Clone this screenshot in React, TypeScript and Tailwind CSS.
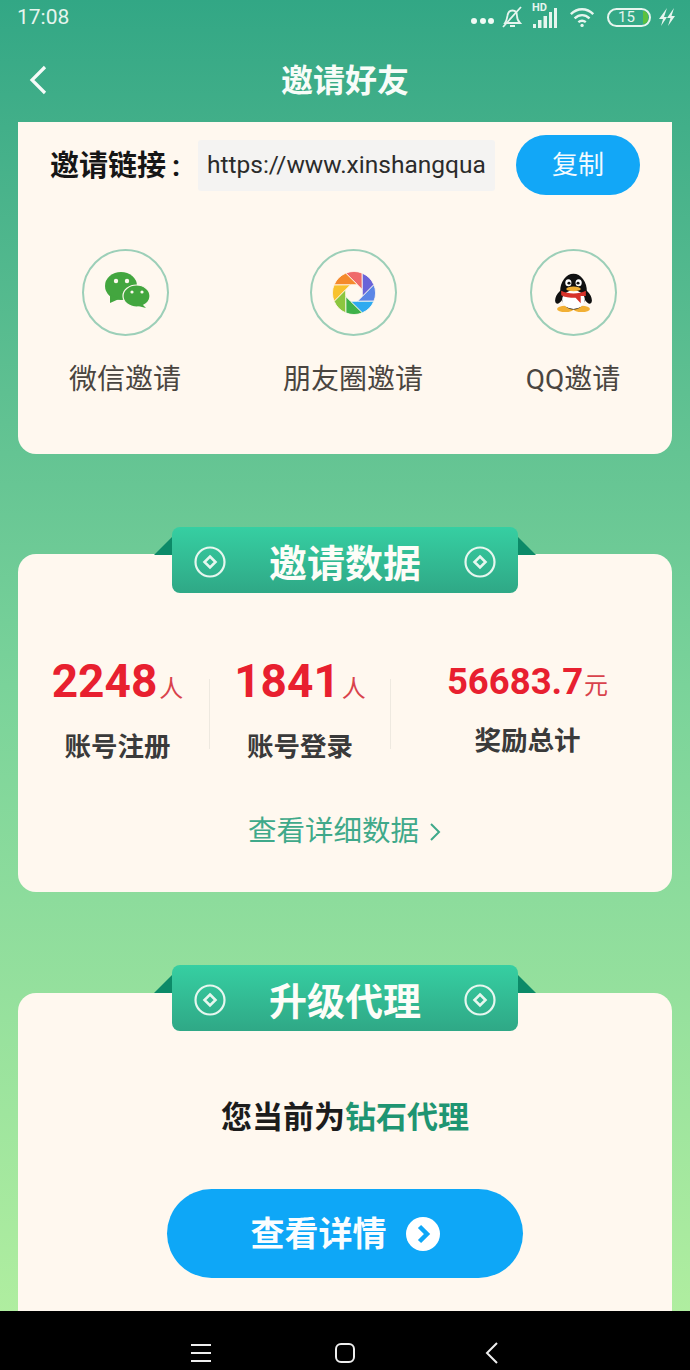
const cjk = "font-['Roboto','Noto_Sans_CJK_SC',sans-serif]";

const Coin = () => (
  <svg className="mt-[4px]" width="32" height="32" viewBox="0 0 32 32" fill="none" stroke="#e6f7ef" strokeWidth="2.2">
    <circle cx="16" cy="16" r="14.5" />
    <path d="M16 10.5 21.5 16 16 21.5 10.5 16Z" strokeWidth="2.6" />
  </svg>
);

const Ribbon = ({ title, className }: { title: string; className: string }) => (
  <div className={`absolute left-[136px] w-[382px] h-[66px] ${className}`}>
    <svg className="absolute left-0 top-[10px]" width="18" height="18" viewBox="0 0 18 18">
      <path d="M0 18 18 0V18Z" fill="#0c8a68" />
    </svg>
    <svg className="absolute right-0 top-[10px]" width="18" height="18" viewBox="0 0 18 18">
      <path d="M18 18 0 0V18Z" fill="#0c8a68" />
    </svg>
    <div className="absolute left-[18px] right-[18px] top-0 h-[66px] rounded-[8px] bg-gradient-to-b from-[#36cfa2] to-[#2fa886] flex items-center justify-between px-[22px]">
      <Coin />
      <span className="pt-[7px] text-[38px] leading-none font-bold text-[#fdfdf8]">{title}</span>
      <Coin />
    </div>
  </div>
);

const WeChat = () => (
  <svg className="ml-[4px] mb-[5px]" width="45" height="36" viewBox="0 0 45 36">
    <ellipse cx="16" cy="14" rx="16" ry="14" fill="#43a63f" />
    <path d="M5 22 5 31 14 27Z" fill="#43a63f" />
    <ellipse cx="31.5" cy="24" rx="13.5" ry="11" fill="#43a63f" stroke="#fff8ef" strokeWidth="1.2" />
    <path d="M37 32 41 36 33 34Z" fill="#43a63f" />
    <circle cx="11" cy="9" r="2.2" fill="#fff8ef" />
    <circle cx="22" cy="9" r="2.2" fill="#fff8ef" />
    <circle cx="27" cy="20" r="1.6" fill="#fff8ef" />
    <circle cx="37" cy="20" r="1.6" fill="#fff8ef" />
  </svg>
);

const Shutter = () => {
  const colors = ["#ef6b6b", "#6a63d8", "#5b86e6", "#2eaaf0", "#3fb24a", "#8cc63f", "#f8c22e", "#f58a2c"];
  return (
    <svg className="ml-[2px]" width="44" height="44" viewBox="-22 -22 44 44">
      {colors.map((c, i) => (
        <path
          key={c}
          d="M-8.23 -19.86A21.5 21.5 0 0 1 8.23 -19.86L8.31 -3.44 3.44 -8.31Z"
          fill={c}
          stroke="#fff8ef"
          strokeWidth="0.8"
          transform={`rotate(${i * 45})`}
        />
      ))}
    </svg>
  );
};

const Penguin = () => (
  <svg width="37" height="41" viewBox="0 0 36 46" preserveAspectRatio="none">
    <ellipse cx="10" cy="41.5" rx="8" ry="3.5" fill="#f2b035" />
    <ellipse cx="26" cy="41.5" rx="8" ry="3.5" fill="#f2b035" />
    <ellipse cx="4.5" cy="28" rx="3.5" ry="8" fill="#111" transform="rotate(22 4.5 28)" />
    <ellipse cx="31.5" cy="28" rx="3.5" ry="8" fill="#111" transform="rotate(-22 31.5 28)" />
    <ellipse cx="18" cy="22" rx="13" ry="20" fill="#111" />
    <ellipse cx="18" cy="31" rx="11" ry="10.5" fill="#fff" />
    <path d="M6 21C13 25 23 25 30 21L30 27 25 27 25 35 20 29C14 29 9 28 6 26Z" fill="#d6322a" />
    <ellipse cx="13" cy="12" rx="3" ry="4" fill="#fff" />
    <ellipse cx="23" cy="12" rx="3" ry="4" fill="#fff" />
    <circle cx="13.6" cy="12.5" r="1.5" fill="#111" />
    <circle cx="22.4" cy="12.5" r="1.5" fill="#111" />
    <ellipse cx="18" cy="19" rx="7" ry="2.6" fill="#f2b035" />
  </svg>
);

const Share = ({ icon, label, className }: { icon: React.ReactNode; label: string; className: string }) => (
  <div className={`flex flex-col items-center ${className}`}>
    <div className="w-[87px] h-[87px] rounded-full border-2 border-[#9ccfb8] flex items-center justify-center">
      {icon}
    </div>
    <span className="mt-[26px] text-[28px] leading-[36px] text-[#4a4540] whitespace-nowrap">{label}</span>
  </div>
);

const Stat = ({ value, unit, label, className }: { value: string; unit: string; label: string; className: string }) => (
  <div className={`flex flex-col items-center ${className}`}>
    <div className="flex items-baseline text-[#e8202f] h-[52px]">
      <span className="text-[46px] leading-[52px] font-bold">{value}</span>
      <span className="ml-[2px] text-[24px] text-[#d9434c]">{unit}</span>
    </div>
    <span className="mt-[22px] text-[26.5px] leading-[36px] font-bold text-[#3a3a3a]">{label}</span>
  </div>
);

export default function App() {
  return (
    <div className={`relative w-[690px] h-[1370px] overflow-hidden flex flex-col bg-gradient-to-b from-[#32a785] via-[#7ad39a] to-[#b4f0a0] ${cjk}`}>
      {/* status bar */}
      <div className="h-[34px] shrink-0 flex items-center pl-[17px] pr-[14px] text-[#e6f5ee]">
        <span className="text-[21px] leading-none">17:08</span>
        <div className="ml-auto flex items-center">
          <div className="flex gap-[2.5px] mt-[8px]">
            <i className="w-[6px] h-[6px] rounded-full bg-[#f0faf5]" />
            <i className="w-[6px] h-[6px] rounded-full bg-[#f0faf5]" />
            <i className="w-[6px] h-[6px] rounded-full bg-[#f0faf5]" />
          </div>
          <svg className="ml-[6px]" width="24" height="24" viewBox="0 0 24 24" fill="none" stroke="#e6f5ee" strokeWidth="1.8">
            <path d="M5 18C7 15 7 13 7.5 10.5 8 7.5 10 5.5 12.5 5.5 15.5 5.5 17 8 17 11 17 14 18 16 20 18Z" />
            <path d="M10 21h5M3 22 21 2" />
          </svg>
          <div className="ml-[8px] relative w-[26px] h-[24px]">
            <span className="absolute left-0 top-[-3px] text-[11px] leading-[12px] font-bold">HD</span>
            <svg className="absolute left-0 top-0" width="26" height="24" viewBox="0 0 26 24" fill="#e6f5ee">
              <rect x="1" y="19" width="3" height="4" />
              <rect x="6" y="15" width="3.5" height="8" />
              <rect x="11.5" y="11" width="3.5" height="12" />
              <rect x="17" y="7" width="3" height="16" />
              <rect x="22" y="3" width="3" height="20" />
            </svg>
          </div>
          <svg className="ml-[11px]" width="28" height="24" viewBox="0 0 30 24" fill="none" stroke="#e6f5ee" strokeWidth="2.6">
            <path d="M2 9C9 2 19 2 26 9M6 13.5C11 9 17 9 22 13.5M10 17.5C12.5 15.5 15.5 15.5 18 17.5" />
            <circle cx="14" cy="21" r="1.8" fill="#e6f5ee" stroke="none" />
          </svg>
          <div className="ml-[10px] w-[44px] h-[19px] rounded-full border-2 border-[#e6f5ee] flex items-center justify-center relative">
            <span className="text-[15px] leading-none mr-[5px]">15</span>
            <i className="absolute right-[1px] top-[1px] w-[5px] h-[13px] rounded-r-full bg-[#5cc13f]" />
          </div>
          <svg className="ml-[7px]" width="18" height="20" viewBox="0 0 18 20" fill="#e6f5ee">
            <path d="M9 1 1 12H5L3 19 9 10H6ZM16 1 9 11H12.5L10 19 17 9H13.5Z" />
          </svg>
        </div>
      </div>

      {/* header */}
      <div className="relative h-[88px] shrink-0 flex items-center justify-center pt-[6px]">
        <svg className="absolute left-[27px] top-[30px]" width="22" height="32" viewBox="0 0 22 32" fill="none" stroke="#f6fbf8" strokeWidth="3.2">
          <path d="M18 3 5 16 18 29" />
        </svg>
        <span className="text-[32px] leading-none font-bold text-[#f8fcf8]">邀请好友</span>
      </div>

      {/* invite card */}
      <div className="mx-[18px] h-[332px] shrink-0 rounded-b-[18px] bg-[#fff8ef]">
        <div className="flex items-center pl-[32px] pt-[13px]">
          <span className="w-[148px] pt-[3px] text-[29px] leading-none font-bold text-[#161616] whitespace-nowrap">
            邀请链接<span className="ml-[6px]">:</span>
          </span>
          <div className="w-[297px] h-[51px] bg-[#f4f3f2] rounded-[3px] flex items-center pl-[9px] pt-[1px] overflow-hidden whitespace-nowrap text-[24.5px] text-[#2b2b2b]">
            https://www.xinshangqua
          </div>
          <div className="ml-[21px] w-[124px] h-[60px] rounded-full bg-[#12a7f7] flex items-center justify-center text-[26px] text-[#f2faff]">
            复制
          </div>
        </div>
        <div className="h-[160px] mt-[54px] flex items-start">
          <Share icon={<WeChat />} label="微信邀请" className="ml-[51px] w-[112px]" />
          <Share icon={<Shutter />} label="朋友圈邀请" className="ml-[102px] w-[140px]" />
          <Share icon={<Penguin />} label="QQ邀请" className="ml-[103px] w-[94px]" />
        </div>
      </div>

      {/* invite data card */}
      <div className="relative mx-[18px] mt-[100px] h-[338px] shrink-0 rounded-[18px] bg-[#fff8ef]">
        <Ribbon title="邀请数据" className="top-[-27px]" />
        <div className="flex items-start pt-[101px]">
          <Stat value="2248" unit="人" label="账号注册" className="ml-[8px] w-[183px]" />
          <div className="w-px h-[70px] mt-[24px] bg-[#eee9e0]" />
          <Stat value="1841" unit="人" label="账号登录" className="w-[180px]" />
          <div className="w-px h-[70px] mt-[24px] bg-[#eee9e0]" />
          <div className="flex-1 flex flex-col items-center pr-[8px]">
            <div className="flex items-baseline h-[52px] pt-[1px]">
              <span className="text-[36.5px] leading-[52px] font-bold text-[#e8202f]">56683.7</span>
              <span className="ml-[1px] text-[24px] text-[#d9434c]">元</span>
            </div>
            <span className="mt-[16px] text-[26.5px] leading-[36px] font-bold text-[#3a3a3a]">奖励总计</span>
          </div>
        </div>
        <div className="mt-[49px] flex items-center justify-center text-[#3fa98a] text-[28.5px] leading-[36px]">
          <span>查看详细数据</span>
          <svg className="ml-[9px]" width="14" height="20" viewBox="0 0 14 20" fill="none" stroke="#3fa98a" strokeWidth="2">
            <path d="M3 2 11 10 3 18" />
          </svg>
        </div>
      </div>

      {/* upgrade card */}
      <div className="relative mx-[18px] mt-[101px] flex-1 rounded-t-[18px] bg-[#fff8ef]">
        <Ribbon title="升级代理" className="top-[-28px]" />
        <div className="pt-[107px] text-center text-[31px] leading-[36px] font-bold text-[#1c1c1c]">
          您当前为<span className="text-[#1f9572]">钻石代理</span>
        </div>
        <div className="ml-[149px] mt-[53px] w-[356px] h-[89px] rounded-full bg-[#0ea7f7] flex items-center justify-center text-[#fafdff]">
          <span className="text-[34px] leading-none font-bold">查看详情</span>
          <svg className="ml-[19px]" width="34" height="34" viewBox="0 0 34 34">
            <circle cx="17" cy="17" r="17" fill="#fff" />
            <path d="M13.5 9.5 21 17 13.5 24.5" fill="none" stroke="#0ea7f7" strokeWidth="4.5" />
          </svg>
        </div>
      </div>

      {/* android nav */}
      <div className="h-[59px] shrink-0 bg-black flex items-center">
        <svg className="ml-[190px] mt-[24px]" width="22" height="22" viewBox="0 0 22 22" stroke="#eee" strokeWidth="2">
          <path d="M1 3H21M1 11H21M1 19H21" />
        </svg>
        <svg className="ml-[122px] mt-[24px]" width="22" height="22" viewBox="0 0 22 22" fill="none" stroke="#eee" strokeWidth="2">
          <rect x="2" y="2" width="18" height="18" rx="5" />
        </svg>
        <svg className="ml-[129px] mt-[24px]" width="14" height="22" viewBox="0 0 14 22" fill="none" stroke="#eee" strokeWidth="2">
          <path d="M12 1 2 11 12 21" />
        </svg>
      </div>
    </div>
  );
}
